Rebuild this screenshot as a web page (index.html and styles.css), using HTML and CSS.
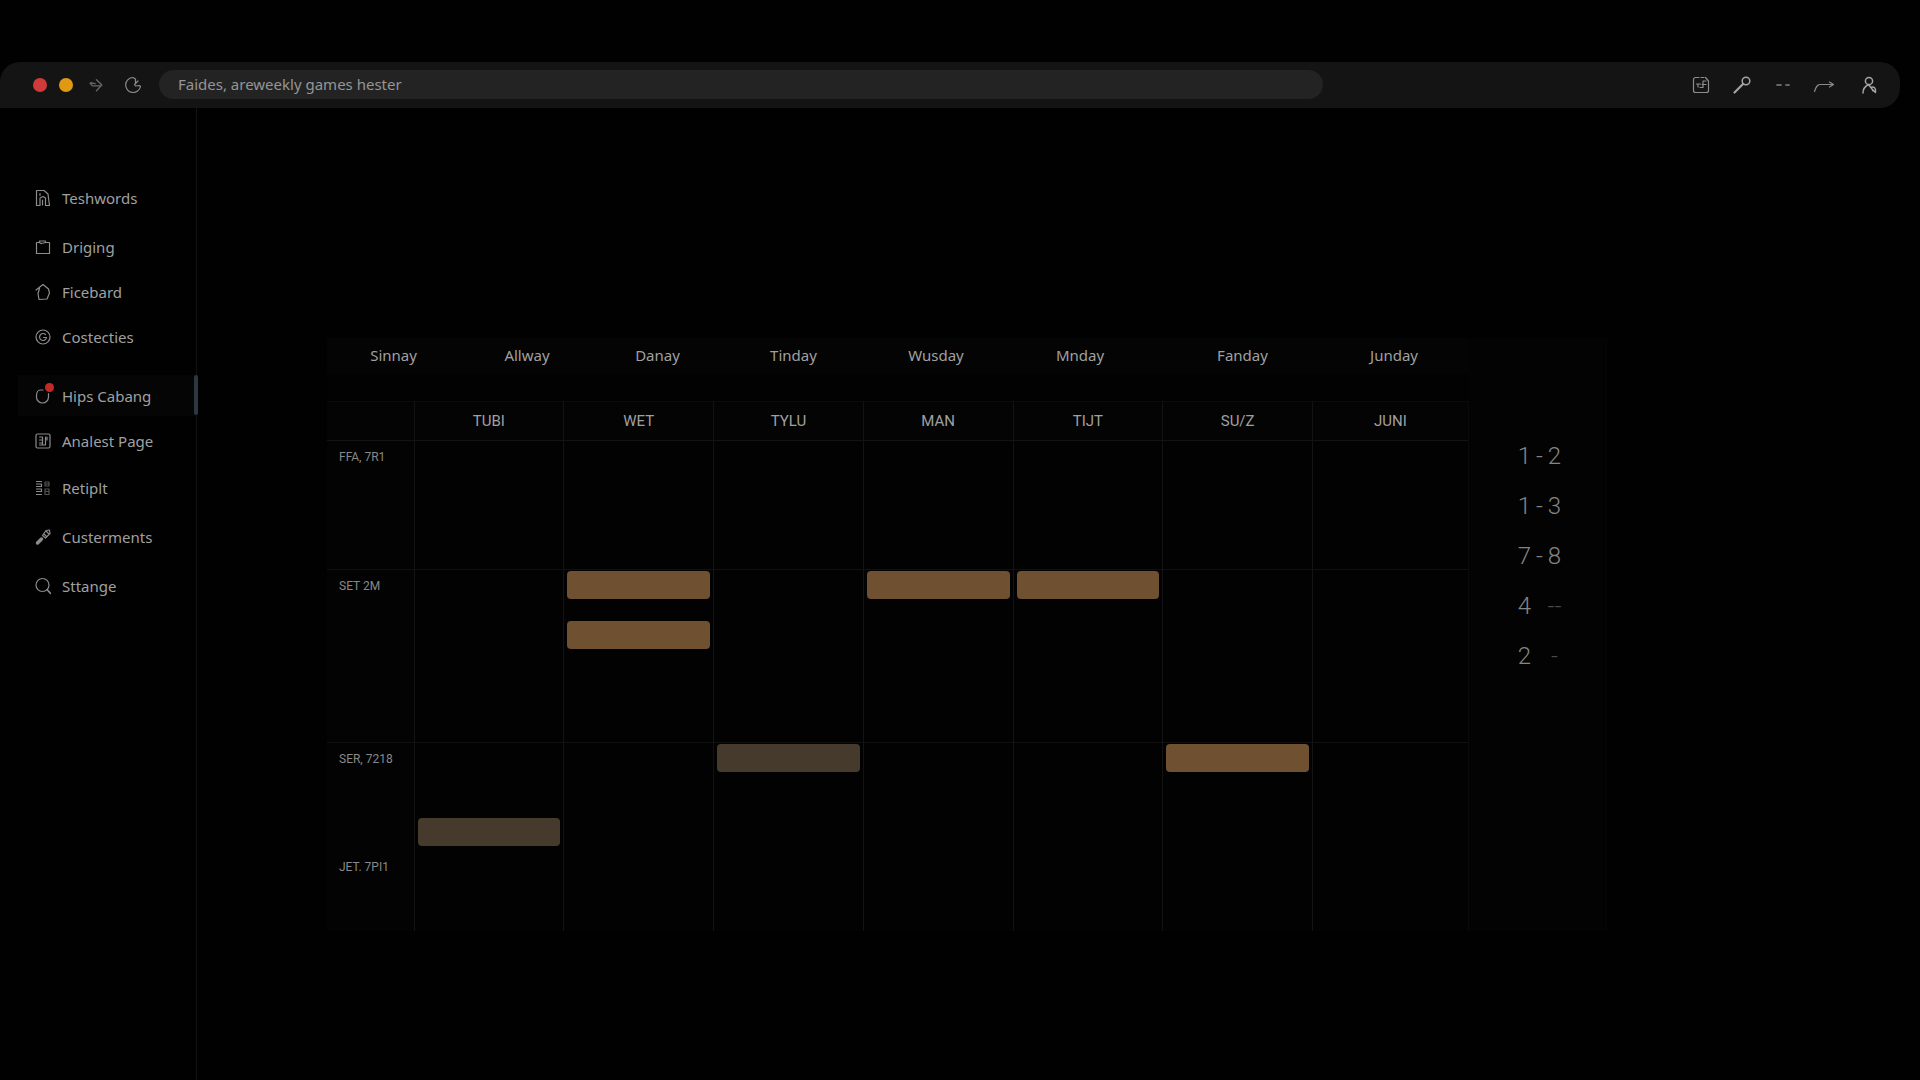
FILE: index.html
```html
<!DOCTYPE html>
<html lang="en">
<head>
    <meta charset="UTF-8">
    <meta name="viewport" content="width=device-width, initial-scale=1.0">
    <title>Weekly games</title>
    <link rel="stylesheet" href="styles.css">
</head>
<body>
    <header class="toolbar">
        <span class="dot dot-red"></span>
        <span class="dot dot-yellow"></span>
        <button class="tool forward" aria-label="Forward">
            <svg viewBox="0 0 18 18"><path d="M9.500 3l6 6-6 6.500M2.500 7l2.500 3h9M3 6.500l5 1"/></svg>
        </button>
        <button class="tool reload" aria-label="Reload">
            <svg viewBox="0 0 18 18"><path d="M9 1.500a7.500 7.500 0 1 0 7.500 9l-1-1-4 .5-1-1.500L14 5M9 1.500L11.500 3v4"/></svg>
        </button>
        <input class="address" type="text" aria-label="Address" value="Faides, areweekly games hester">
        <div class="tools">
            <button class="tool" aria-label="Save">
                <svg viewBox="0 0 18 18"><path d="M7 1.500H3.500a2 2 0 0 0-2 2v11a2 2 0 0 0 2 2h11a2 2 0 0 0 2-2V5l-3-3.500M4.500 8h4M6 8v3M14 5h-3v6.500H8M10 8.500h4M9 1.500h3"/></svg>
            </button>
            <button class="tool" aria-label="Search">
                <svg class="bright" viewBox="0 0 18 18"><circle cx="13" cy="5" r="3.800"/><path d="M10 8l-8.500 8.500" stroke-width="2.200"/></svg>
            </button>
            <button class="tool more" aria-label="More">
                <svg viewBox="0 0 18 18"><path d="M3 9h4M12 9h3" stroke-width="1.800"/></svg>
            </button>
            <button class="tool" aria-label="Share">
                <svg class="wide" viewBox="0 0 22 18"><path d="M1.500 15.500C3 11 4 8.500 7 8.500h13M16.500 6l4 2.500-4 2.500"/></svg>
            </button>
            <button class="tool profile" aria-label="Profile">
                <svg class="bright" viewBox="0 0 18 18"><circle cx="9" cy="5" r="3.600"/><path d="M3 17c0-5 2.500-7 5.500-8.500M9 9l3 4 3.500 3.500M11 11.500c3-1.500 5 1 4.500 4l-3-1"/></svg>
            </button>
        </div>
    </header>

    <div class="layout">
        <nav class="sidebar">
            <div class="nav-group">
                <a href="#"><svg viewBox="0 0 16 18"><path d="M1.500 16.500v-15H9l4 3.500 1.500 11.500h-4V9L8 7.500 5 9v7.500H1.500M7.500 11v5M5 4.500v2"/></svg>Teshwords</a>
            </div>
            <div class="nav-group">
                <a href="#"><svg viewBox="0 0 16 18"><path d="M1.500 4.500h3V3h6v1.500h4v11h-13zM4.500 4.500l1.500 1 5-1"/></svg>Driging</a>
                <a href="#"><svg viewBox="0 0 16 18"><path d="M1 7l7-5.500L13.500 6l1 4-2.500 6-8 .5L3 10.500l1.500-5"/></svg>Ficebard</a>
                <a href="#"><svg viewBox="0 0 16 18"><circle cx="8" cy="9" r="7"/><path d="M10.500 6.500a3.500 3.500 0 1 0 1 3H8.500"/></svg>Costecties</a>
            </div>
            <div class="nav-group">
                <a href="#" class="active"><svg viewBox="0 0 16 18"><path d="M8 3H5.500C2.500 3 1.500 5 1.500 9v1a6 6 0 0 0 12 0V6.500"/></svg><span class="badge"></span>Hips Cabang</a>
                <a href="#"><svg viewBox="0 0 16 18"><rect x="1" y="2" width="14" height="14" rx="1.500"/><path d="M4.500 5h3v3h-3M4.500 11h3M4.500 13h6M7.500 8v5M10.500 5v8M12 5v3"/></svg>Analest Page</a>
            </div>
            <div class="nav-group spaced">
                <a href="#"><svg viewBox="0 0 16 18"><path d="M1.500 2.500h5M1.500 5h5v2.500h-5M1.500 10h5v2.500h-5M1.500 15.500h5"/><path d="M10 3h4v4h-4zM10 5h4M10 10h4v5.500h-4zM10 12.500h4" opacity=".6"/></svg>Retiplt</a>
                <a href="#"><svg viewBox="0 0 16 18"><path d="M2.500 15l4-4" stroke-width="3.500"/><path d="M7.500 7.500l3.500-5 3.500-.5.500 3.500-4.500 4.500zM11 3l3 3M9 6l2.500 2.500"/></svg>Custerments</a>
                <a href="#"><svg viewBox="0 0 16 18"><circle cx="7.500" cy="8" r="6.500"/><path d="M12 12.500l3.500 4" stroke-width="1.600"/></svg>Sttange</a>
            </div>
        </nav>

        <main class="content">
            <div class="planner">
                <div class="week">
                    <div class="days">
                        <span>Sinnay</span>
                        <span>Allway</span>
                        <span>Danay</span>
                        <span>Tinday</span>
                        <span>Wusday</span>
                        <span>Mnday</span>
                        <span>Fanday</span>
                        <span>Junday</span>
                    </div>

                    <table class="calendar">
                        <colgroup>
                            <col class="col-time">
                            <col><col><col><col><col><col>
                            <col class="col-last">
                        </colgroup>
                        <thead>
                            <tr>
                                <td></td>
                                <th scope="col">TUBI</th>
                                <th scope="col">WET</th>
                                <th scope="col">TYLU</th>
                                <th scope="col">MAN</th>
                                <th scope="col">TIJT</th>
                                <th scope="col">SU/Z</th>
                                <th scope="col">JUNI</th>
                            </tr>
                        </thead>
                        <tbody>
                            <tr class="row-first">
                                <th scope="row">FFA, 7R1</th>
                                <td></td><td></td><td></td><td></td><td></td><td></td><td></td>
                            </tr>
                            <tr class="row-second">
                                <th scope="row">SET 2M</th>
                                <td></td>
                                <td><div class="event"></div><div class="event"></div></td>
                                <td></td>
                                <td><div class="event"></div></td>
                                <td><div class="event"></div></td>
                                <td></td>
                                <td></td>
                            </tr>
                            <tr class="row-third">
                                <th scope="row">SER, 7218</th>
                                <td class="late"><div class="event muted"></div></td>
                                <td></td>
                                <td><div class="event muted"></div></td>
                                <td></td>
                                <td></td>
                                <td><div class="event"></div></td>
                                <td></td>
                            </tr>
                            <tr class="row-fourth">
                                <th scope="row">JET. 7PI1</th>
                                <td></td><td></td><td></td><td></td><td></td><td></td><td></td>
                            </tr>
                        </tbody>
                    </table>
                </div>

                <aside class="scores">
                    <div class="score"><span>1</span><span>-</span><span>2</span></div>
                    <div class="score"><span>1</span><span>-</span><span>3</span></div>
                    <div class="score"><span>7</span><span>-</span><span>8</span></div>
                    <div class="score"><span>4</span><span></span><span class="dim">--</span></div>
                    <div class="score"><span>2</span><span></span><span class="dim">-</span></div>
                </aside>
            </div>
        </main>
    </div>
</body>
</html>
```
FILE: styles.css
```css
/* General */
* {
    box-sizing: border-box;
}

body {
    margin: 0;
    padding-top: 62px;
    min-height: 100vh;
    display: flex;
    flex-direction: column;
    background-color: #010101;
    color: #a0a0a0;
    font-family: "Noto Sans", sans-serif;
    font-size: 15px;
}

svg {
    fill: none;
    stroke: #8c8c8c;
    stroke-width: 1.2;
    stroke-linecap: round;
    stroke-linejoin: round;
}

/* Browser toolbar */
.toolbar {
    display: flex;
    align-items: center;
    height: 46px;
    margin-right: 20px;
    padding: 0 20px 1px 33px;
    background-color: #141414;
    border-radius: 20px 20px 20px 0;
}

.dot {
    width: 14px;
    height: 14px;
    border-radius: 50%;
    margin-right: 12px;
}

.dot-red {
    background-color: #cf3b3b;
}

.dot-yellow {
    background-color: #e09a12;
}

.tool {
    display: flex;
    align-items: center;
    justify-content: center;
    width: 22px;
    height: 22px;
    padding: 0;
    border: none;
    background: none;
    cursor: pointer;
}

.tool svg {
    width: 18px;
    height: 18px;
}

.tool svg.wide {
    width: 22px;
}

.tool svg.bright {
    stroke: #a5a5a5;
    stroke-width: 1.5;
}

.forward svg {
    width: 16px;
    stroke: #666;
    stroke-width: 1.6;
}

.more svg {
    stroke: #666;
}

.reload {
    margin-left: 15px;
}

.address {
    flex: 1;
    min-width: 0;
    height: 29px;
    margin: 0 367px 0 15px;
    padding: 0 19px 1px;
    border: none;
    border-radius: 15px;
    background-color: #232323;
    color: #959595;
    font: inherit;
}

.tools {
    display: flex;
    gap: 19px;
    flex-shrink: 0;
}

.profile {
    margin-left: 4px;
}

/* Sidebar */
.layout {
    display: flex;
    flex: 1;
}

.sidebar {
    flex: 0 0 197px;
    padding: 69px 0 0 18px;
    border-right: 1px solid #121212;
}

.nav-group {
    display: flex;
    flex-direction: column;
    gap: 4px;
    margin-bottom: 8px;
}

.nav-group:nth-child(2) {
    margin-bottom: 18px;
}

.nav-group:nth-child(3) {
    margin-bottom: 6px;
}

.nav-group.spaced {
    gap: 8px;
}

.nav-group a {
    position: relative;
    display: flex;
    align-items: center;
    gap: 11px;
    height: 41px;
    padding-left: 17px;
    color: #a0a0a0;
    text-decoration: none;
}

.nav-group svg {
    width: 16px;
    height: 18px;
}

.nav-group a.active {
    background-color: #050505;
}

.nav-group a.active::after {
    content: "";
    position: absolute;
    top: 0;
    right: -2px;
    width: 4px;
    height: 40px;
    border-radius: 2px;
    background-color: #2d3641;
}

.badge {
    position: absolute;
    top: 8px;
    left: 27px;
    width: 9px;
    height: 9px;
    border-radius: 50%;
    background-color: #c22a2a;
}

/* Planner */
.content {
    flex: 1;
    min-width: 0;
    padding: 230px 313px 0 130px;
}

.planner {
    display: flex;
    background-color: #020202;
}

.week {
    flex: 1;
    min-width: 0;
}

.days {
    display: grid;
    grid-template-columns: 133fr 134fr 127fr 145fr 140fr 148fr 177fr 126fr;
    align-items: center;
    height: 36px;
    margin-bottom: 27px;
    padding: 0 12px 2px 0;
    background-color: #040404;
    text-align: center;
}

.calendar {
    width: 100%;
    table-layout: fixed;
    border-collapse: collapse;
}

.col-time {
    width: 87px;
}

.col-last {
    width: 156px;
}

.calendar th,
.calendar td {
    padding: 1px 3px;
    border-right: 1px solid #131313;
    vertical-align: top;
    font-weight: normal;
}

.calendar th:last-child,
.calendar td:last-child {
    border-right-color: #0a0a0a;
}

.calendar thead tr {
    height: 39px;
    background-color: #040404;
    border-top: 1px solid #0b0b0b;
    border-bottom: 1px solid #131313;
}

.calendar thead th {
    vertical-align: middle;
    font-family: Roboto, sans-serif;
}

.calendar tbody th {
    padding: 8px 0 0 12px;
    background-color: #030303;
    color: #888;
    font-family: Roboto, sans-serif;
    font-size: 12px;
    line-height: 16px;
    text-align: left;
}

.row-first {
    height: 129px;
}

.row-second {
    height: 173px;
    border-top: 1px solid #101010;
}

.row-third {
    height: 108px;
    border-top: 1px solid #101010;
}

.row-fourth {
    height: 80px;
}

.calendar td.late {
    padding-bottom: 5px;
    vertical-align: bottom;
}

.event {
    height: 28px;
    border-radius: 4px;
    background-color: #6f5132;
}

.event + .event {
    margin-top: 22px;
}

.event.muted {
    background-color: #463a2d;
}

/* Scores */
.scores {
    display: flex;
    flex-direction: column;
    gap: 20px;
    width: 138px;
    padding: 103px 0 0 48px;
    border-right: 1px solid #060606;
    background-color: #030303;
    color: #858585;
    font-family: Roboto, sans-serif;
    font-size: 24px;
    font-weight: 300;
    line-height: 30px;
}

.score {
    display: grid;
    grid-template-columns: 15px 15px 15px;
    text-align: center;
    white-space: nowrap;
}

.dim {
    color: #4a4a4a;
}
```
